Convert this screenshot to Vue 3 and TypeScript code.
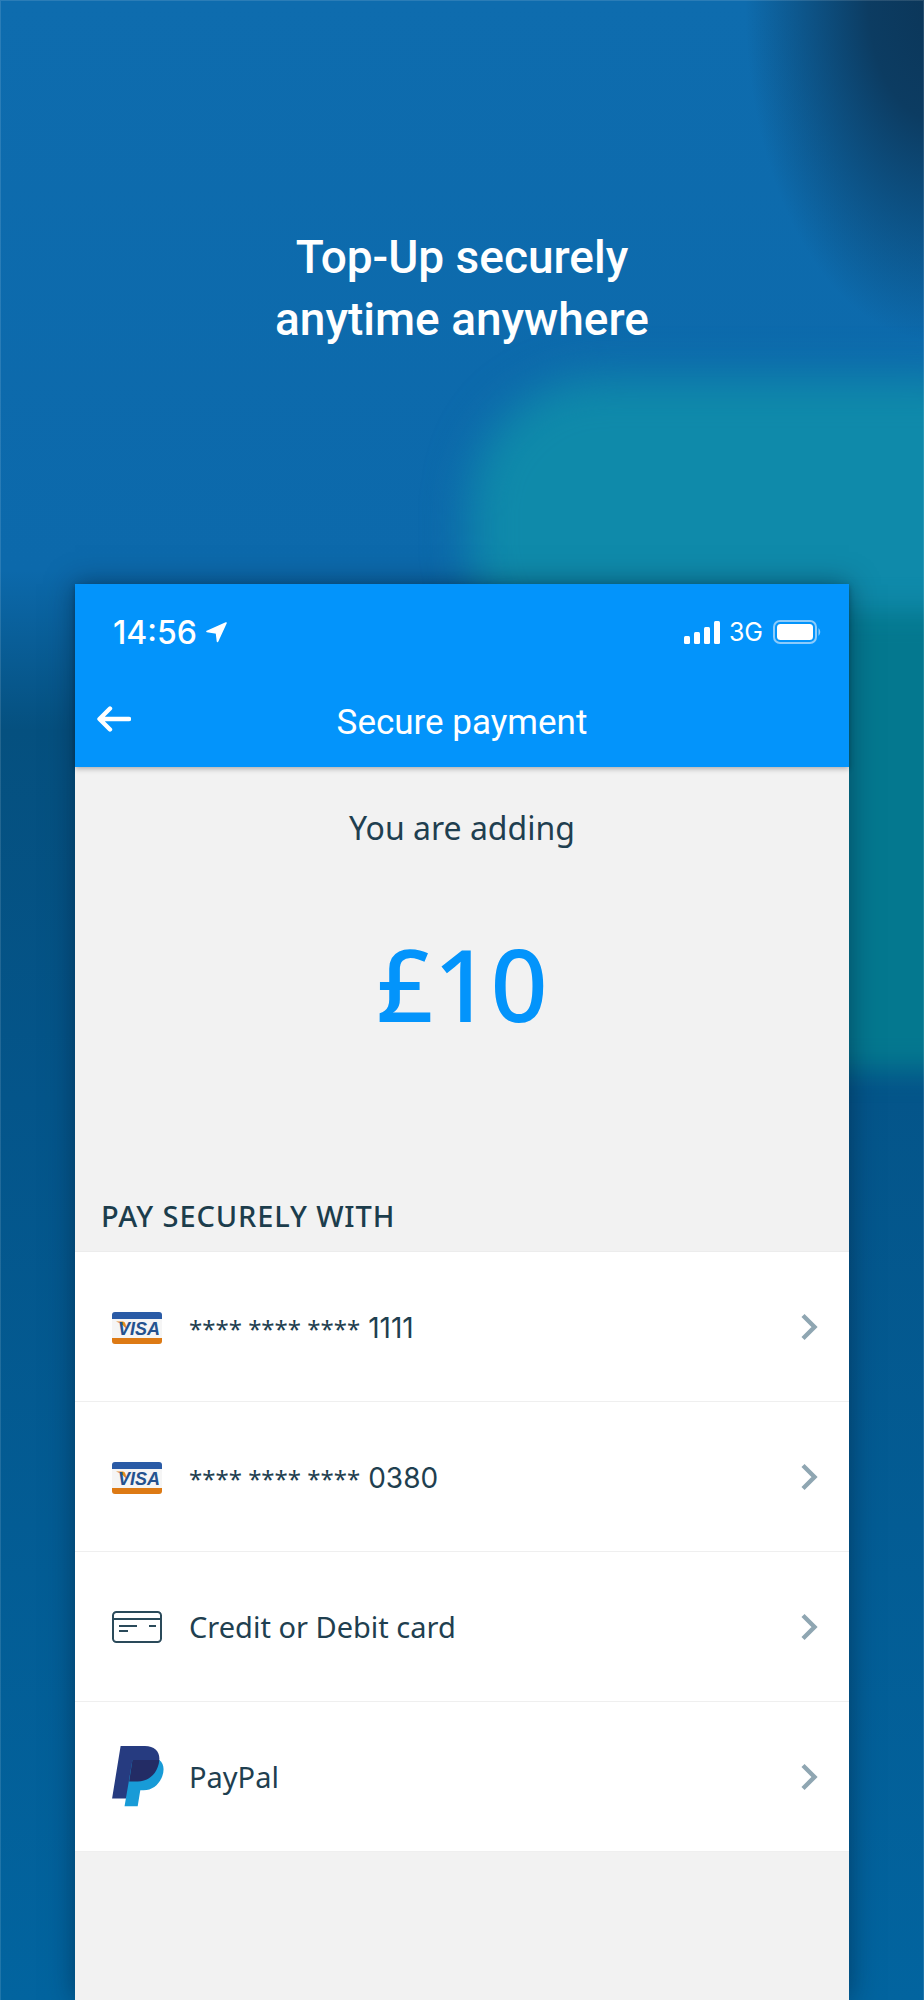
<script setup lang="ts">
type Row = { id: string; icon: 'visa' | 'card' | 'paypal'; stars?: string; label: string };

const rows: Row[] = [
  { id: 'v1', icon: 'visa', stars: '**** **** ****', label: '1111' },
  { id: 'v2', icon: 'visa', stars: '**** **** ****', label: '0380' },
  { id: 'new', icon: 'card', label: 'Credit or Debit card' },
  { id: 'pp', icon: 'paypal', label: 'PayPal' },
];
</script>

<template>
  <div class="stage">
    <div class="glow glow-top"></div>
    <div class="glow glow-side"></div>

    <h1 class="headline">Top-Up securely<br />anytime anywhere</h1>

    <section class="phone">
      <header class="topbar">
        <div class="status">
          <div class="status-left">
            <span class="time">14:56</span>
            <svg width="22" height="22" viewBox="0 0 22 22">
              <path d="M20 2 L1 10.5 L10.5 12 L11.5 20.5 Z" fill="#fff" stroke="#fff" stroke-width="1.6" stroke-linejoin="round" />
            </svg>
          </div>
          <div class="status-right">
            <svg width="36" height="23" viewBox="0 0 36 23">
              <rect x="0" y="15" width="6" height="8" rx="1.5" fill="#fff" />
              <rect x="10" y="11" width="6" height="12" rx="1.5" fill="#fff" />
              <rect x="20" y="6" width="6" height="17" rx="1.5" fill="#fff" />
              <rect x="30" y="0" width="6" height="23" rx="1.5" fill="#fff" />
            </svg>
            <span class="net">3G</span>
            <svg width="49" height="24" viewBox="0 0 49 24">
              <rect x="1" y="1" width="42" height="22" rx="6" fill="none" stroke="#8ccbfb" stroke-width="2" />
              <rect x="4" y="4" width="36" height="16" rx="3.5" fill="#fff" />
              <path d="M45.5 8 Q49 12 45.5 16 Z" fill="#8ccbfb" />
            </svg>
          </div>
        </div>
        <nav class="nav">
          <svg class="back" width="34" height="26" viewBox="0 0 34 26">
            <path d="M32 13 H3 M13 2.5 L2.5 13 L13 23.5" fill="none" stroke="#fff" stroke-width="4.4" stroke-linecap="round" stroke-linejoin="round" />
          </svg>
          <span class="title">Secure payment</span>
        </nav>
      </header>

      <div class="summary">
        <p class="adding">You are adding</p>
        <p class="amount">£10</p>
      </div>

      <h2 class="section-label">PAY SECURELY WITH</h2>

      <ul class="methods">
        <li v-for="row in rows" :key="row.id" class="method">
          <span class="icon">
            <svg v-if="row.icon === 'visa'" class="visa" width="50" height="32" viewBox="0 0 50 32">
              <rect width="50" height="32" rx="3" fill="#f5f5f5" />
              <path d="M0 7 V3 Q0 0 3 0 H47 Q50 0 50 3 V7 Z" fill="#2a5ba6" />
              <path d="M0 26 H50 V29 Q50 32 47 32 H3 Q0 32 0 29 Z" fill="#dd7a14" />
              <path d="M4 9.5 H11 Q13 9.5 13.5 12 L15 19 Q12 12 4 9.5 Z" fill="#e58a1f" />
              <text x="27" y="22.8" class="visa-text" text-anchor="middle">VISA</text>
            </svg>
            <svg v-else-if="row.icon === 'card'" width="50" height="32" viewBox="0 0 50 32">
              <rect x="1" y="1" width="48" height="30" rx="3.5" fill="none" stroke="#2a4a5a" stroke-width="2" />
              <path d="M1 8 H49" stroke="#2a4a5a" stroke-width="2" />
              <path d="M7 15 H25 M37 15 H44 M7 20 H16" stroke="#2a4a5a" stroke-width="2" />
            </svg>
            <svg v-else width="52" height="61" viewBox="0 0 158 186">
              <path d="M26 0 H100 C130 0 146 18 144 42 C140 84 112 108 78 108 H56 L44 160 L0 160 Z" fill="#263b80" />
              <path d="M62 43 H144 C158 53 160 72 153 92 C143 118 123 135 96 135 H86 L78 184 H38 Z" fill="#189bd7" />
              <path d="M62 43 H144 C140 84 112 108 78 108 H52 Z" fill="#232c65" />
            </svg>
          </span>
          <span class="method-label">
            <span v-if="row.stars" class="stars">{{ row.stars }}</span>
            <span :class="{ digits: row.stars }">{{ row.label }}</span>
          </span>
          <svg width="18" height="28" viewBox="0 0 18 28">
            <path d="M3 2.5 L14.5 14 L3 25.5" fill="none" stroke="#8fa6b2" stroke-width="4.4" />
          </svg>
        </li>
      </ul>
    </section>
  </div>
</template>

<style scoped>
.stage {
  position: relative;
  width: 924px;
  height: 2000px;
  overflow: hidden;
  box-sizing: border-box;
  padding-top: 226px;
  font-family: "Noto Sans", "Open Sans", sans-serif;
  background:
    radial-gradient(ellipse 190px 340px at 935px 0px, #0b3659 0%, #0c3c62 35%, rgba(12, 60, 98, 0) 100%),
    linear-gradient(180deg, #0e6cae 0, #0c69ab 570px, #05507f 730px, #04558a 1100px, #02649f 2000px);
}

.stage::after {
  content: "";
  position: absolute;
  inset: 0;
  border: 1px solid rgba(255, 255, 255, 0.12);
  border-bottom: none;
  pointer-events: none;
}

.glow {
  position: absolute;
}

.glow-top {
  left: 470px;
  top: 378px;
  width: 600px;
  height: 300px;
  border-radius: 130px;
  background: #0f8aaa;
  filter: blur(22px);
}

.glow-side {
  left: 500px;
  top: 610px;
  width: 500px;
  height: 460px;
  background: #04788f;
  filter: blur(14px);
}

.headline {
  position: relative;
  margin: 0;
  text-align: center;
  color: #fff;
  font-family: Roboto, sans-serif;
  font-weight: 500;
  font-size: 46px;
  line-height: 62px;
}

.phone {
  position: absolute;
  left: 75px;
  top: 584px;
  width: 774px;
  height: 1416px;
  background: #f2f2f2;
  box-shadow: 0 0 26px rgba(0, 25, 50, 0.5);
}

.topbar {
  height: 183px;
  box-sizing: border-box;
  background: #0394fb;
  box-shadow: 0 2px 5px rgba(0, 0, 0, 0.28);
  color: #fff;
  padding-top: 33px;
}

.status {
  display: flex;
  justify-content: space-between;
  align-items: center;
  height: 30px;
  padding: 0 27px 0 38px;
}

.status-left,
.status-right {
  display: flex;
  align-items: center;
}

.status-left {
  gap: 9px;
}

.status-right svg:first-child {
  margin-right: 9px;
}

.time {
  font-family: Inter, Roboto, sans-serif;
  font-weight: 500;
  font-size: 32px;
}

.net {
  font-family: Inter, Roboto, sans-serif;
  font-size: 25px;
  margin-right: 10px;
}

.nav {
  display: flex;
  align-items: center;
  justify-content: center;
  position: relative;
  height: 50px;
  margin-top: 50px;
}

.back {
  position: absolute;
  left: 22px;
  top: 9px;
}

.title {
  font-family: Roboto, sans-serif;
  font-weight: 400;
  font-size: 35px;
}

.summary {
  text-align: center;
  color: #1f3f50;
}

.adding {
  margin: 39px 0 0;
  font-size: 32px;
  line-height: 44px;
}

.amount {
  margin: 66px 0 0;
  font-size: 100px;
  font-weight: 500;
  line-height: 134px;
  color: #0394fb;
}

.section-label {
  margin: 0;
  padding: 145px 0 0 26px;
  font-size: 29px;
  line-height: 42px;
  font-weight: 500;
  letter-spacing: 0.9px;
  color: #1c3d4c;
}

.methods {
  list-style: none;
  margin: 14px 0 0;
  padding: 0;
  background: #fff;
  border-top: 1px solid #ececec;
}

.method {
  display: flex;
  align-items: center;
  height: 149px;
  padding: 0 31px 0 37px;
  border-bottom: 1px solid #efefef;
}

.icon {
  width: 54px;
  display: flex;
  align-items: center;
  margin-right: 23px;
}

.visa {
  margin-top: 2px;
}

.method-label {
  flex: 1;
  font-size: 29px;
  color: #1f3f50;
}

.stars {
  font-size: 24px;
  margin-right: 8px;
}

.digits {
  font-family: Inter, sans-serif;
  font-size: 28px;
}

.visa-text {
  font-family: "Liberation Sans", sans-serif;
  font-weight: 700;
  font-style: italic;
  font-size: 18px;
  fill: #24528f;
}
</style>

<style>
html,
body {
  margin: 0;
  background: #0b66a8;
}
</style>
